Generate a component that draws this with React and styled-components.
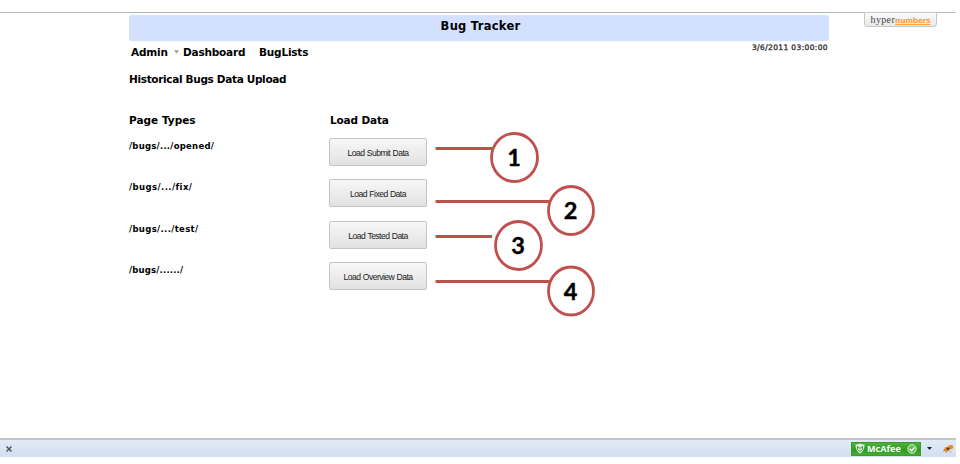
import React from "react";
import styled, { createGlobalStyle } from "styled-components";

const GlobalStyle = createGlobalStyle`
  * { box-sizing: border-box; }
  body { margin: 0; background: #fff; overflow: hidden; }
`;

const Page = styled.div`
  position: relative;
  display: flex;
  flex-direction: column;
  width: 956px;
  height: 457px;
  padding-top: 12px;
  color: #000;
  font-family: "DejaVu Sans", Verdana, sans-serif;
  font-weight: 700;
`;

const Main = styled.main`
  flex: 1;
  border-top: 1px solid #b9babd;
  padding: 2px 0 0 129px;
`;

const Label = styled.span`
  display: block;
  width: max-content;
  font-size: ${(p) => p.$size}px;
  line-height: 16px;
  letter-spacing: ${(p) => p.$track || 0}px;
  white-space: nowrap;
`;

const TitleBar = styled.header`
  display: flex;
  justify-content: center;
  width: 700px;
  height: 26px;
  padding: 3px 0 0 3px;
  border-radius: 3px;
  background: #d3e0ff;
`;

const Toolbar = styled.nav`
  display: flex;
  align-items: flex-start;
  width: 700px;
  height: 30px;
  padding: 3px 1px 0 2px;
`;

const NavItem = styled.div`
  display: flex;
  width: ${(p) => p.$width}px;
`;

const Caret = styled.svg`
  width: 5px;
  height: 4px;
  margin: 6px 0 0 6px;
  fill: #a0a0a0;
`;

const Stamp = styled.time`
  margin: -4px 0 0 auto;
  color: #333;
  font-size: 7.5px;
  line-height: 16px;
  font-weight: 400;
  -webkit-text-stroke: 0.35px #333;
  white-space: nowrap;
  letter-spacing: 0.37px;
`;

const Grid = styled.section`
  display: grid;
  grid-template-columns: 201px 97px;
  grid-template-rows: 26px repeat(4, 41.4px);
  margin-top: 25px;
`;

const UploadButton = styled.button`
  width: 98px;
  height: 28px;
  margin: 0 0 0 -1px;
  padding: 2px 0 0;
  border: 1px solid #c4c4c4;
  border-radius: 2px;
  background: linear-gradient(#f7f7f7, #e2e2e2);
  color: #222;
  font: 400 8.6px/12px "Liberation Sans", Arial, sans-serif;
  letter-spacing: -0.55px;
  word-spacing: 0.5px;
  white-space: nowrap;
`;

const Brand = styled.div`
  position: absolute;
  top: 12px;
  left: 864px;
  display: flex;
  align-items: baseline;
  justify-content: center;
  width: 73px;
  height: 15px;
  border: 1px solid #c6c6c6;
  border-radius: 0 0 3px 3px;
  background: linear-gradient(#fafafa, #e9e9e9);
  color: #444;
  font: 400 10px/13px "Liberation Serif", serif;
  letter-spacing: 0.35px;
`;

const BrandAccent = styled.span`
  color: #ffa13c;
  font: 700 7.5px/13px "DejaVu Sans", sans-serif;
  text-decoration: underline;
  letter-spacing: -0.25px;
`;

const Callouts = styled.svg`
  position: absolute;
  top: 120px;
  left: 430px;
  width: 180px;
  height: 210px;
  stroke: #c0504d;
  stroke-width: 2.8;
  fill: #fff;
`;

const Number = styled.text`
  fill: #000;
  stroke: #000;
  stroke-width: 0.4;
  font: 700 23.5px Lato, sans-serif;
  text-anchor: middle;
`;

const StatusBar = styled.footer`
  display: flex;
  align-items: center;
  height: 19px;
  padding-left: 6px;
  border-top: 2px solid #c2c5ca;
  background: linear-gradient(#e1ebf7, #d2dfef);
`;

const CloseIcon = styled.svg`
  width: 6px;
  height: 6px;
  stroke: #555;
  stroke-width: 1.5;
`;

const McAfee = styled.div`
  display: flex;
  align-items: center;
  width: 70px;
  height: 14px;
  margin-left: auto;
  padding: 0 3px 0 3px;
  border: 1px solid #3c9a2c;
  background: linear-gradient(#4db23c, #2e9b22 60%, #45ad34);
  color: #fff;
  font: 700 9.1px/12px "Open Sans", sans-serif;
`;

const Shield = styled.svg`
  width: 10px;
  height: 11px;
  margin-right: 2px;
`;

const Check = styled.svg`
  width: 10px;
  height: 10px;
  margin-left: auto;
`;

const Arrow = styled.svg`
  width: 5px;
  height: 3px;
  margin: 0 11px 0 6px;
  fill: #222;
`;

const Bug = styled.svg`
  width: 11px;
  height: 11px;
  margin-right: 2px;
`;

const rows = [
  { path: "/bugs/.../opened/", track: 0.24, action: "Load Submit Data" },
  { path: "/bugs/.../fix/", track: 0.42, action: "Load Fixed Data" },
  { path: "/bugs/.../test/", track: 0.34, action: "Load Tested Data" },
  { path: "/bugs/....../", track: 0.18, action: "Load Overview Data" },
];

const callouts = [
  { cx: 84.5, cy: 37.5, rx: 23, y: 28.5, end: 63 },
  { cx: 141, cy: 90.5, rx: 22.5, y: 81.5, end: 120 },
  { cx: 88.5, cy: 125.5, rx: 23, y: 116.5, end: 62 },
  { cx: 141, cy: 171, rx: 22.5, y: 161.5, end: 120 },
];

export default function App() {
  return (
    <>
      <GlobalStyle />
      <Page>
        <Main>
          <TitleBar><Label $size={11.5} $track={0.27}>Bug Tracker</Label></TitleBar>
          <Toolbar>
            <NavItem $width={52}>
              <Label $size={10.5} $track={-0.2}>Admin</Label>
              <Caret viewBox="0 0 6 4"><path d="M0 0h6L3 4z" /></Caret>
            </NavItem>
            <NavItem $width={76}><Label $size={10.5} $track={-0.2}>Dashboard</Label></NavItem>
            <NavItem $width={60}><Label $size={10.5} $track={-0.2}>BugLists</Label></NavItem>
            <Stamp>3/6/2011 03:00:00</Stamp>
          </Toolbar>
          <Label $size={10.5} $track={-0.33}>Historical Bugs Data Upload</Label>
          <Grid>
            <Label $size={10.5} $track={0.02}>Page Types</Label>
            <Label $size={10.5} $track={-0.15}>Load Data</Label>
            {rows.map((row) => (
              <React.Fragment key={row.path}>
                <Label $size={8.5} $track={row.track}>{row.path}</Label>
                <UploadButton>{row.action}</UploadButton>
              </React.Fragment>
            ))}
          </Grid>
        </Main>
        <StatusBar>
          <CloseIcon viewBox="0 0 6 6"><path d="M.5.5l5 5m0-5l-5 5" /></CloseIcon>
          <McAfee>
            <Shield viewBox="0 0 10 11">
              <path d="M.5 1.5Q3 1.5 5 .5q2 1 4.500 1Q9.500 8 5 10.500.5 8 .5 1.500z" fill="#dff0d8" />
              <path d="M2.500 6.500v-3L5 5.500l2.500-2v3L5 8.500z" fill="none" stroke="#389b2c" />
            </Shield>
            McAfee
            <Check viewBox="0 0 10 10">
              <circle cx="5" cy="5" r="4.200" fill="#65bf54" stroke="#d5f0cc" />
              <path d="M2.800 5l1.700 1.700 3-3.200" fill="none" stroke="#fff" strokeWidth="1.300" />
            </Check>
          </McAfee>
          <Arrow viewBox="0 0 5 3"><path d="M0 0h5L2.500 3z" /></Arrow>
          <Bug viewBox="0 0 11 11">
            <path d="M2 4l2 2M0 8l3-1M3 10l2-3M7 8l1 1.500M6 2l1 2" stroke="#9b8468" strokeWidth=".8" />
            <ellipse cx="4.500" cy="6" rx="4" ry="2.200" transform="rotate(-25 4.500 6)" fill="#d98a2b" />
            <circle cx="8.300" cy="4" r="2" fill="#e58a1c" />
            <path d="M4 6.500l2-1.500" stroke="#5c2c12" strokeWidth="1.800" />
          </Bug>
        </StatusBar>
        <Brand>hyper<BrandAccent>numbers</BrandAccent></Brand>
        <Callouts viewBox="0 0 180 210">
          {callouts.map((c, i) => (
            <g key={i}>
              <path d={`M5.500 ${c.y}H${c.end}`} />
              <ellipse cx={c.cx} cy={c.cy} rx={c.rx} ry="24" />
              <Number x={c.cx - 0.5} y={c.cy + 8.5}>{i + 1}</Number>
            </g>
          ))}
        </Callouts>
      </Page>
    </>
  );
}
